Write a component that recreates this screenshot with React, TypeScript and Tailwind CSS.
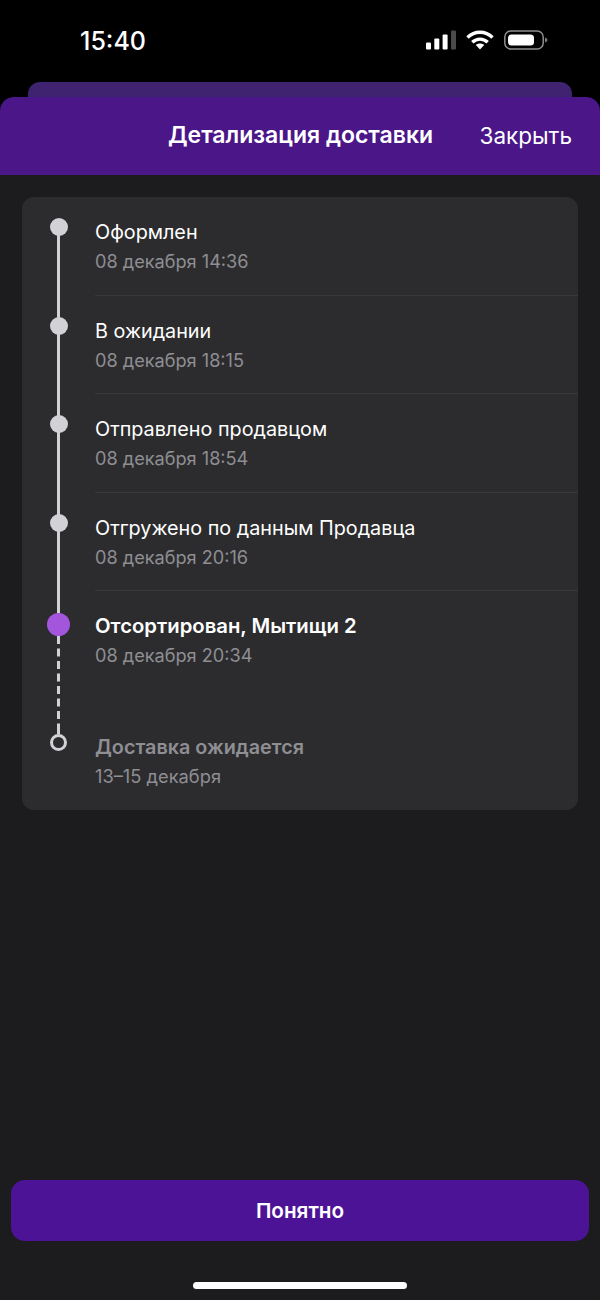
const steps = [
  { title: "Оформлен", date: "08 декабря 14:36" },
  { title: "В ожидании", date: "08 декабря 18:15" },
  { title: "Отправлено продавцом", date: "08 декабря 18:54" },
  { title: "Отгружено по данным Продавца", date: "08 декабря 20:16" },
];

function StatusBar() {
  return (
    <div className="flex h-[82px] items-start justify-between bg-black pl-[80px] pr-[52px] pt-[26px]">
      <span className="text-[25px] leading-[30px] font-medium text-white">15:40</span>
      <div className="flex items-start gap-[10px] pt-[4px]">
        <svg width="30" height="20" viewBox="0 0 30 20">
          <rect x="0" y="12.500" width="5" height="7" rx="1" fill="#fff" />
          <rect x="8.300" y="8.500" width="5" height="11" rx="1" fill="#fff" />
          <rect x="16.600" y="4.500" width="5" height="15" rx="1" fill="#fff" />
          <rect x="25" y="0.500" width="5" height="19" rx="1" fill="#4a4a4a" />
        </svg>
        <svg width="28" height="20" viewBox="0 0 28 20" fill="none" stroke="#fff" strokeWidth="3.400">
          <path d="M1.500 7.500C8.500 .5 19.500 .5 26.500 7.500" />
          <path d="M6.300 12.300C10.800 8 17.200 8 21.700 12.300" />
          <path d="M14 19.500l-4.200-4.400c2.300-2 6.100-2 8.400 0z" fill="#fff" stroke="none" />
        </svg>
        <svg width="44" height="20" viewBox="0 0 44 20" fill="none">
          <rect x="0.800" y="1" width="38.400" height="18" rx="6" stroke="#8e8e8e" strokeWidth="1.500" />
          <rect x="4" y="4.500" width="26" height="11" rx="3.500" fill="#fff" />
          <path d="M41 7.500c1.700.4 2.500 1.300 2.500 2.500s-.8 2.100-2.500 2.500z" fill="#777" />
        </svg>
      </div>
    </div>
  );
}

export default function App() {
  return (
    <div className="flex h-[1300px] w-[600px] flex-col overflow-hidden bg-black font-['Inter',sans-serif]">
      <StatusBar />

      <div className="mx-[28px] h-[15px] rounded-t-[12px] bg-[#3f2370]" />

      <div className="flex h-[78px] shrink-0 items-center rounded-t-[14px] bg-[#4a1688] pb-[1px] pr-[28px]">
        <div className="w-[168px]" />
        <h1 className="flex-1 text-[23px] font-semibold text-white">Детализация доставки</h1>
        <button className="text-[22.500px] text-white">Закрыть</button>
      </div>

      <div className="flex flex-1 flex-col bg-[#1c1c1e] px-[22px] pt-[22px]">
        <div className="rounded-[12px] bg-[#2c2c2e]">
          {steps.map((step, i) => (
            <div key={step.title} className="flex h-[98.500px]">
              <div className="flex w-[73px] flex-col items-center">
                <div className={`h-[24px] w-[3px] bg-[#d1d1d6] ${i === 0 ? "opacity-0" : ""}`} />
                <div className="-my-[3px] h-[18px] w-[18px] shrink-0 rounded-full bg-[#d1d1d6]" />
                <div className="w-[3px] flex-1 bg-[#d1d1d6]" />
              </div>
              <div className="flex-1 border-b border-[#38383a] pt-[21px]">
                <div className="text-[19.800px] leading-[28px] text-white">{step.title}</div>
                <div className="mt-[2px] text-[18.150px] leading-[26px] text-[#8e8e93]">{step.date}</div>
              </div>
            </div>
          ))}

          <div className="flex h-[143px]">
            <div className="flex w-[73px] flex-col items-center">
              <div className="h-[22px] w-[3px] bg-[#d1d1d6]" />
              <div className="h-[23px] w-[23px] shrink-0 rounded-full bg-[#a356dc]" />
              <svg width="3" height="98" viewBox="0 0 3 98" className="shrink-0">
                <line x1="1.500" y1="0" x2="1.500" y2="88" stroke="#d1d1d6" strokeWidth="3" strokeDasharray="8 4.500" />
                <line x1="1.500" y1="88" x2="1.500" y2="98" stroke="#d1d1d6" strokeWidth="3" />
              </svg>
            </div>
            <div className="flex-1 pt-[21px]">
              <div className="text-[20.300px] leading-[28px] font-semibold text-white">Отсортирован, Мытищи 2</div>
              <div className="mt-[2px] text-[18.150px] leading-[26px] text-[#8e8e93]">08 декабря 20:34</div>
            </div>
          </div>

          <div className="flex h-[76px]">
            <div className="flex w-[73px] flex-col items-center">
              <div className="h-[17px] w-[17px] shrink-0 rounded-full border-[3px] border-[#d1d1d6]" />
            </div>
            <div className="flex-1">
              <div className="-mt-[1px] text-[19.800px] leading-[28px] font-semibold text-[#8e8e93]">Доставка ожидается</div>
              <div className="mt-[2px] text-[18.300px] leading-[26px] text-[#8e8e93]">13–15 декабря</div>
            </div>
          </div>
        </div>

        <div className="flex-1" />

        <button className="-mx-[11px] h-[61px] shrink-0 rounded-[14px] bg-[#4c1396] pt-[1px] text-[20.700px] font-semibold text-white">
          Понятно
        </button>

        <div className="flex h-[59px] shrink-0 items-end justify-center pb-[11px]">
          <div className="h-[7px] w-[214px] rounded-full bg-white" />
        </div>
      </div>
    </div>
  );
}
